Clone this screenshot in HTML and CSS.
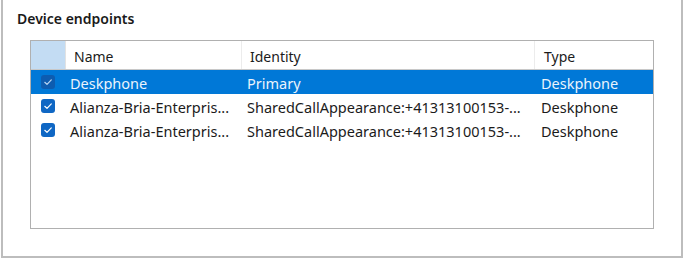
FILE: index.html
```html
<!DOCTYPE html>
<html>
<head>
<meta charset="utf-8">
<link rel="stylesheet" href="styles.css">
</head>
<body>
<div class="panel">
  <div class="title">Device endpoints</div>
  <div class="list">
    <div class="row header">
      <div class="cell check-h"></div>
      <div class="cell name">Name</div>
      <div class="cell ident">Identity</div>
      <div class="cell type">Type</div>
    </div>
    <div class="row selected">
      <div class="cell check"><span class="box"><svg viewBox="0 0 14 14" width="14" height="14"><path d="M3.8 7.3 L6 9.4 L10.3 4.9" fill="none" stroke="currentColor" stroke-width="1.2" stroke-linecap="round" stroke-linejoin="round"/></svg></span></div>
      <div class="cell name">Deskphone</div>
      <div class="cell ident">Primary</div>
      <div class="cell type">Deskphone</div>
    </div>
    <div class="row">
      <div class="cell check"><span class="box"><svg viewBox="0 0 14 14" width="14" height="14"><path d="M3.8 7.3 L6 9.4 L10.3 4.9" fill="none" stroke="currentColor" stroke-width="1.2" stroke-linecap="round" stroke-linejoin="round"/></svg></span></div>
      <div class="cell name">Alianza-Bria-Enterpris...</div>
      <div class="cell ident">SharedCallAppearance:+41313100153-...</div>
      <div class="cell type">Deskphone</div>
    </div>
    <div class="row">
      <div class="cell check"><span class="box"><svg viewBox="0 0 14 14" width="14" height="14"><path d="M3.8 7.3 L6 9.4 L10.3 4.9" fill="none" stroke="currentColor" stroke-width="1.2" stroke-linecap="round" stroke-linejoin="round"/></svg></span></div>
      <div class="cell name">Alianza-Bria-Enterpris...</div>
      <div class="cell ident">SharedCallAppearance:+41313100153-...</div>
      <div class="cell type">Deskphone</div>
    </div>
  </div>
</div>
</body>
</html>
```
FILE: styles.css
```css
html, body {
  margin: 0;
  padding: 0;
  background: #ffffff;
}
body {
  font-family: "Noto Sans", "Open Sans", sans-serif;
  color: #1b1b1b;
}
.panel {
  box-sizing: border-box;
  margin-left: 1px;
  width: 682px;
  height: 258px;
  border: 2px solid #bdbdbd;
  border-top: none;
  padding: 7px 0 0 14px;
}
.title {
  font-size: 14px;
  font-weight: 600;
  line-height: 24px;
  height: 33px;
  color: #1a1a1a;
}
.list {
  box-sizing: border-box;
  margin-left: 13px;
  width: 624px;
  height: 189px;
  border: 1px solid #b0b0b0;
  font-size: 14.5px;
}
.row {
  display: grid;
  grid-template-columns: 35px 176px 293px 118px;
  height: 24px;
  align-items: center;
}
.row.header {
  box-sizing: border-box;
  height: 29px;
  border-bottom: 1px solid #c8c8c8;
  align-items: stretch;
  font-size: 14px;
}
.row.header .cell {
  display: flex;
  align-items: center;
  padding-top: 3px;
  border-right: 1px solid #ececec;
}
.row.header .cell.type { border-right: none; }
.row.header .check-h { background: #c3dcf3; border-right: 1px solid #e2e2e2; padding-top: 0; }
.row.header .name { padding-left: 8px; }
.row.header .ident { padding-left: 8px; }
.row.header .type { padding-left: 9px; }
.cell {
  white-space: nowrap;
  overflow: hidden;
}
.row .name, .row .ident, .row .type { padding-top: 2px; }
.row .name { padding-left: 4px; }
.row .ident { padding-left: 5px; }
.row .type { padding-left: 6px; }
.check {
  display: flex;
  align-items: center;
  padding-left: 10px;
}
.box {
  display: block;
  width: 14px;
  height: 14px;
  border-radius: 3px;
  background: #0f67c4;
  color: #ffffff;
}
.box svg { display: block; }
.selected {
  background: #0078d7;
  color: #eaf3fc;
}
.selected .box {
  background: #0d5cb0;
  color: #b9d5f2;
}
```
